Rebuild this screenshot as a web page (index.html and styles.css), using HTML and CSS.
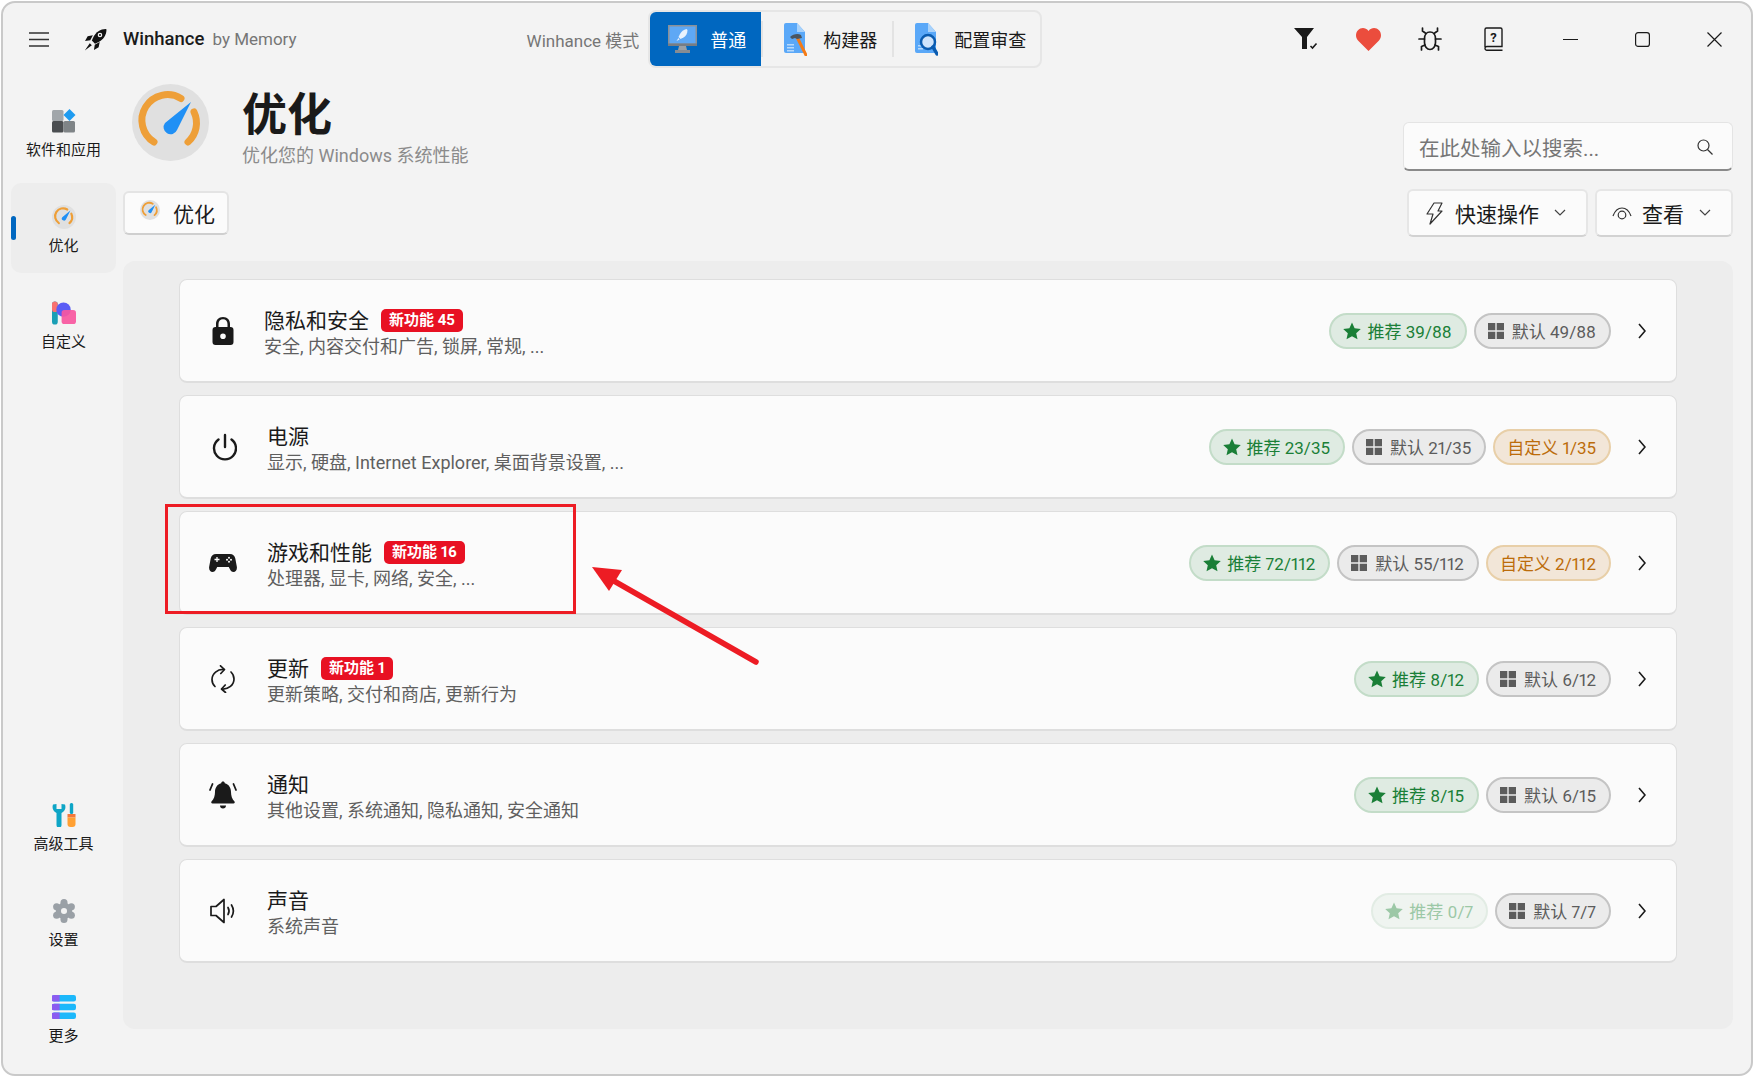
FILE: index.html
```html
<!DOCTYPE html>
<html lang="zh-CN">
<head>
    <meta charset="UTF-8">
    <title>Winhance</title>
    <link rel="stylesheet" href="styles.css">
</head>
<body>
    <svg class="sprite" xmlns="http://www.w3.org/2000/svg">
        <symbol id="gauge" viewBox="0 0 77 77">
            <circle cx="38.5" cy="38.5" r="38.5" fill="#e0e0e0"/>
            <path d="M22 58A25.5 25.5 0 0 1 49 14.500" fill="none" stroke="#ee9f38" stroke-width="7" stroke-linecap="round"/>
            <path d="M62 28A25.500 25.500 0 0 1 56 58" fill="none" stroke="#ee9f38" stroke-width="7" stroke-linecap="round"/>
            <path d="M59 18 45 46a7 7 0 1 1-12-7z" fill="#2090f5"/>
        </symbol>
        <symbol id="star" viewBox="0 0 18 18">
            <path d="M9 .6l2.600 5.700 6.200.7-4.600 4.200 1.300 6.100L9 14.200l-5.500 3.100 1.300-6.100L.2 7l6.200-.7z"/>
        </symbol>
        <symbol id="win" viewBox="0 0 16 16">
            <path d="M0 0h7.300v7.300H0zM8.700 0H16v7.300H8.700zM0 8.700h7.300V16H0zM8.700 8.700H16V16H8.700z"/>
        </symbol>
        <symbol id="chev" viewBox="0 0 8 16">
            <path d="M1 1l6 7-6 7" fill="none" stroke="#1a1a1a" stroke-width="1.600"/>
        </symbol>
        <symbol id="down" viewBox="0 0 12 8">
            <path d="M1 1l5 5 5-5" fill="none" stroke="#444" stroke-width="1.200"/>
        </symbol>
    </svg>

    <div class="window">
        <header class="titlebar">
            <svg class="menu-icon" viewBox="0 0 20 15"><path d="M0 1h20M0 7.500h20M0 14h20" stroke="#333" stroke-width="1.300"/></svg>
            <svg class="rocket" viewBox="0 0 22 22">
                <path d="M21 1c-5.500 0-9.500 3-12 7.500l-1.500 3.500 3 3 3.500-1.500C18.500 11 21.500 7 21.500 1.500z" fill="#111"/>
                <circle cx="15.300" cy="6.700" r="2.200" fill="#f3f3f3"/>
                <circle cx="15.300" cy="6.700" r="1" fill="#111"/>
                <path d="M8.500 7 3.500 8 1 12.500l5-.8zM15 13.500l-1 5-4.500 2.500.8-5zM5.500 14.500 .8 21.500l6.700-5z" fill="#111"/>
            </svg>
            <span class="app-name">Winhance</span>
            <span class="app-by">by Memory</span>
            <span class="mode-label">Winhance 模式</span>
            <div class="modes">
                <button class="mode mode-active">
                    <svg class="mode-monitor" viewBox="0 0 29 28">
                        <rect x="0" y="0" width="29" height="21" fill="#8b9198"/>
                        <rect x="1.500" y="1.500" width="26" height="17" fill="#5ea8f5"/>
                        <path d="M0 18.500h29V21H0z" fill="#777d84"/>
                        <path d="M11 21h7l1 4h-9z" fill="#9aa0a6"/>
                        <path d="M7 25h15v3H7z" fill="#868c93"/>
                        <path d="M18.500 4c-3 .5-5 2.500-6.500 5l-1.500 3 2 2 3-1.500c2.500-1.500 4-4 4-7.500z" fill="#eaf3fd"/>
                        <path d="M10.500 13 8.500 16l3-1.500z" fill="#eaf3fd"/>
                    </svg>
                    <span>普通</span>
                </button>
                <span class="mode-sep"></span>
                <button class="mode mode-build">
                    <svg class="mode-doc" viewBox="0 0 23 33">
                        <path d="M2 0h11l8 9v19a2 2 0 0 1-2 2H2a2 2 0 0 1-2-2V2a2 2 0 0 1 2-2z" fill="#5aa8f8"/>
                        <path d="M13 0l8 9h-8z" fill="#a8d2fb"/>
                        <path d="M3 21h7v1.500H3zM3 24h7v1.500H3zM3 27h7v1.500H3z" fill="#b7d9fb"/>
                        <path d="M13 14l9 18" stroke="#f47b16" stroke-width="3" stroke-linecap="round"/>
                        <path d="M6 14c3-3 8-4 11-2l1 3-5 1-2-1-3 1z" fill="#4a5560"/>
                    </svg>
                    <span>构建器</span>
                </button>
                <span class="mode-sep"></span>
                <button class="mode mode-audit">
                    <svg class="mode-doc" viewBox="0 0 23 33">
                        <path d="M2 0h11l8 9v19a2 2 0 0 1-2 2H2a2 2 0 0 1-2-2V2a2 2 0 0 1 2-2z" fill="#5aa8f8"/>
                        <path d="M13 0l8 9h-8z" fill="#a8d2fb"/>
                        <path d="M3 22h5v1.500H3zM3 25h5v1.500H3z" fill="#b7d9fb"/>
                        <circle cx="13" cy="19" r="7" fill="#cfe4fb" stroke="#0b5cb0" stroke-width="2.500"/>
                        <path d="M18 24l4 7" stroke="#0b5cb0" stroke-width="3.500" stroke-linecap="round"/>
                    </svg>
                    <span>配置审查</span>
                </button>
            </div>
            <div class="tools">
                <svg class="tool-filter" viewBox="0 0 25 22">
                    <path d="M0 0h20l-7 9v12H8V9z" fill="#1a1a1a"/>
                    <path d="M16.500 18l2 2 4-4.500" fill="none" stroke="#1a1a1a" stroke-width="1.600"/>
                </svg>
                <svg class="tool-heart" viewBox="0 0 25 23">
                    <path d="M12.500 23 2 12.500C-.7 9.500-.6 4.800 2 2.200 5-.7 9.500-.7 12.500 3c3-3.700 7.500-3.700 10.500-.8 2.600 2.600 2.700 7.300 0 10.300z" fill="#eb4d3d"/>
                </svg>
                <svg class="tool-bug" viewBox="0 0 24 24">
                    <g fill="none" stroke="#1a1a1a" stroke-width="1.700" stroke-linecap="round">
                        <path d="M12 5c-3.500 0-5.500 3-5.500 6.500v4C6.500 19.500 9 22.500 12 22.500s5.500-3 5.500-7v-4C17.500 8 15.500 5 12 5z"/>
                        <path d="M8 6.500 4.500 4V1M16 6.500 19.500 4V1M6.500 12H1M17.500 12H23M7 18l-3.500 1.500V23M17 18l3.500 1.500V23"/>
                    </g>
                </svg>
                <svg class="tool-book" viewBox="0 0 19 24">
                    <path d="M1 20V2.500A1.500 1.500 0 0 1 2.500 1h14A1.500 1.500 0 0 1 18 2.500V19.500H3a2 2 0 0 0-2 2 1.800 1.800 0 0 0 2 1.700h15.500" fill="none" stroke="#1a1a1a" stroke-width="1.400"/>
                    <text class="book-mark" x="9.500" y="14.500" text-anchor="middle">?</text>
                </svg>
                <div class="win-btns">
                    <svg viewBox="0 0 15 15"><path d="M0 7.500h15" stroke="#1a1a1a" stroke-width="1.200"/></svg>
                    <svg viewBox="0 0 15 15"><rect x=".6" y=".6" width="13.800" height="13.800" rx="2.500" fill="none" stroke="#1a1a1a" stroke-width="1.200"/></svg>
                    <svg viewBox="0 0 15 15"><path d="M.5.500l14 14M14.500.500l-14 14" stroke="#1a1a1a" stroke-width="1.200"/></svg>
                </div>
            </div>
        </header>

        <div class="app-body">
            <nav class="sidebar">
                <div class="nav-group">
                    <a class="nav-item">
                        <svg class="nav-icon" viewBox="0 0 24 24">
                            <rect x="0" y="1" width="11.500" height="11" rx="1.500" fill="#a1a6aa"/>
                            <rect x="0" y="12" width="11.500" height="11.500" rx="1.500" fill="#4b4e51"/>
                            <rect x="11.500" y="12" width="11.500" height="11.500" rx="1.500" fill="#7f8487"/>
                            <path d="M17.500 0l6 6-6 6-6-6z" fill="#1e9bf0"/>
                        </svg>
                        <span>软件和应用</span>
                    </a>
                    <a class="nav-item nav-active">
                        <svg class="nav-icon"><use href="#gauge"/></svg>
                        <span>优化</span>
                    </a>
                    <a class="nav-item">
                        <svg class="nav-icon" viewBox="0 0 25 24">
                            <rect x="0" y="0" width="6" height="24" rx="3" fill="#1a9fb5"/>
                            <rect x="0" y="0" width="6" height="11" rx="3" fill="#f87171"/>
                            <circle cx="12" cy="8.500" r="7.500" fill="#5a5cf5"/>
                            <rect x="10" y="9" width="15" height="14.500" rx="3" fill="#f957a0" opacity=".92"/>
                        </svg>
                        <span>自定义</span>
                    </a>
                </div>
                <div class="nav-group">
                    <a class="nav-item">
                        <svg class="nav-icon" viewBox="0 0 24 24">
                            <path d="M1 1.500c-1 3-.5 6.500 3.500 8.500v12a2.500 2.500 0 0 0 5 0V10c4-2 4.500-5.500 3.500-8.500L9.500 1v5h-5V1z" fill="#0ea5c6"/>
                            <rect x="17.800" y="0" width="3.400" height="11" rx="1.500" fill="#0ea5c6"/>
                            <path d="M15.500 11h8v3.500h-8z" fill="#f5793a"/>
                            <path d="M15.500 14.500h8V21a3 3 0 0 1-3 3h-2a3 3 0 0 1-3-3z" fill="#ffa033"/>
                        </svg>
                        <span>高级工具</span>
                    </a>
                    <a class="nav-item">
                        <svg class="nav-icon" viewBox="0 0 26 26">
                            <g fill="#9aa0a6">
                                <circle cx="13" cy="13" r="9"/>
                                <circle cx="13" cy="3.800" r="3.800"/>
                                <circle cx="13" cy="22.200" r="3.800"/>
                                <circle cx="5" cy="8.400" r="3.800"/>
                                <circle cx="21" cy="8.400" r="3.800"/>
                                <circle cx="5" cy="17.600" r="3.800"/>
                                <circle cx="21" cy="17.600" r="3.800"/>
                            </g>
                            <circle cx="13" cy="13" r="3.300" fill="#f3f3f3"/>
                        </svg>
                        <span>设置</span>
                    </a>
                    <a class="nav-item">
                        <svg class="nav-icon" viewBox="0 0 22 22">
                            <rect width="22" height="6" rx="2" fill="#1cb8fb"/>
                            <rect y="8" width="22" height="6" rx="2" fill="#1cb8fb"/>
                            <rect y="16" width="22" height="6" rx="2" fill="#1cb8fb"/>
                            <path d="M7 0H2a2 2 0 0 0 0 6h5zM7 8H2a2 2 0 0 0 0 6h5zM7 16H2a2 2 0 0 0 0 6h5z" fill="#8b5cf0"/>
                        </svg>
                        <span>更多</span>
                    </a>
                </div>
            </nav>

            <main class="main">
                <div class="page-head">
                    <svg class="page-icon"><use href="#gauge"/></svg>
                    <div class="page-titles">
                        <h1>优化</h1>
                        <p>优化您的 Windows 系统性能</p>
                    </div>
                    <div class="search">
                        <span>在此处输入以搜索...</span>
                        <svg viewBox="0 0 16 16"><circle cx="6.500" cy="6.500" r="5.500" fill="none" stroke="#333" stroke-width="1.200"/><path d="M10.500 10.500 15.500 15.500" stroke="#333" stroke-width="1.300"/></svg>
                    </div>
                </div>

                <div class="toolbar">
                    <div class="tab">
                        <svg class="tab-icon"><use href="#gauge"/></svg>
                        <span>优化</span>
                    </div>
                    <div class="actions">
                        <button class="action action-quick">
                            <svg class="action-bolt" viewBox="0 0 17 23"><path d="M8 1h8l-4 8h4L4 22l3-10H1z" fill="none" stroke="#333" stroke-width="1.200" stroke-linejoin="round"/></svg>
                            <span>快速操作</span>
                            <svg class="action-down"><use href="#down"/></svg>
                        </button>
                        <button class="action action-view">
                            <svg class="action-eye" viewBox="0 0 20 14"><path d="M1 10C3 4.500 6 2 10 2s7 2.500 9 8" fill="none" stroke="#333" stroke-width="1.200"/><circle cx="10" cy="9" r="3.800" fill="none" stroke="#333" stroke-width="1.200"/></svg>
                            <span>查看</span>
                            <svg class="action-down"><use href="#down"/></svg>
                        </button>
                    </div>
                </div>

                <section class="panel">
                    <div class="row row-lock">
                        <svg class="row-icon" viewBox="0 0 28 28"><path d="M14 0c-4.500 0-7 3-7 7v3H6.500C4.500 10 3.500 11 3.500 13v12c0 2 1 3 3 3h15c2 0 3-1 3-3V13c0-2-1-3-3-3H21V7c0-4-2.500-7-7-7zm-4.500 7c0-3 1.800-4.700 4.500-4.700s4.500 1.700 4.500 4.700v3h-9zM14 16.500a2.800 2.800 0 1 1 0 5.600 2.800 2.800 0 0 1 0-5.600z" fill="#1a1a1a"/></svg>
                        <div class="row-text">
                            <div class="row-title"><span>隐私和安全</span><span class="new-tag">新功能 45</span></div>
                            <div class="row-sub">安全, 内容交付和广告, 锁屏, 常规, ...</div>
                        </div>
                        <div class="pills">
                            <span class="pill pill-rec"><svg class="pill-star"><use href="#star"/></svg>推荐 39/88</span>
                            <span class="pill pill-def"><svg class="pill-win"><use href="#win"/></svg>默认 49/88</span>
                        </div>
                        <svg class="row-chev"><use href="#chev"/></svg>
                    </div>

                    <div class="row">
                        <svg class="row-icon" viewBox="0 0 28 28"><path d="M16 2v12" stroke="#1a1a1a" stroke-width="2.400" stroke-linecap="round"/><path d="M9.500 6.500a11 11 0 1 0 13 0" fill="none" stroke="#1a1a1a" stroke-width="2.400" stroke-linecap="round"/></svg>
                        <div class="row-text">
                            <div class="row-title"><span>电源</span></div>
                            <div class="row-sub">显示, 硬盘, Internet Explorer, 桌面背景设置, ...</div>
                        </div>
                        <div class="pills">
                            <span class="pill pill-rec"><svg class="pill-star"><use href="#star"/></svg>推荐 23/35</span>
                            <span class="pill pill-def"><svg class="pill-win"><use href="#win"/></svg>默认 21/35</span>
                            <span class="pill pill-custom">自定义 1/35</span>
                        </div>
                        <svg class="row-chev"><use href="#chev"/></svg>
                    </div>

                    <div class="row">
                        <svg class="row-icon" viewBox="0 0 28 28"><path d="M7 5h14c3 0 4.500 1.500 5.300 4.500l1.500 8c.6 3-1 5.500-3.300 5.500-1.800 0-2.800-1.200-3.700-3l-1-2H8.200l-1 2c-.9 1.800-1.900 3-3.700 3-2.300 0-3.900-2.500-3.300-5.500l1.500-8C2.500 6.500 4 5 7 5z" fill="#1a1a1a"/><path d="M8 8v5M5.500 10.500h5" stroke="#fbfbfb" stroke-width="1.300"/><circle cx="20" cy="8.800" r="1" fill="#fbfbfb"/><circle cx="20" cy="12.800" r="1" fill="#fbfbfb"/><circle cx="18" cy="10.800" r="1" fill="#fbfbfb"/><circle cx="22" cy="10.800" r="1" fill="#fbfbfb"/></svg>
                        <div class="row-text">
                            <div class="row-title"><span>游戏和性能</span><span class="new-tag">新功能 16</span></div>
                            <div class="row-sub">处理器, 显卡, 网络, 安全, ...</div>
                        </div>
                        <div class="pills">
                            <span class="pill pill-rec"><svg class="pill-star"><use href="#star"/></svg>推荐 72/112</span>
                            <span class="pill pill-def"><svg class="pill-win"><use href="#win"/></svg>默认 55/112</span>
                            <span class="pill pill-custom">自定义 2/112</span>
                        </div>
                        <svg class="row-chev"><use href="#chev"/></svg>
                    </div>

                    <div class="row">
                        <svg class="row-icon" viewBox="0 0 28 28"><g fill="none" stroke="#1a1a1a" stroke-width="1.700" stroke-linecap="round" stroke-linejoin="round"><path d="M15 4.500C8.500 4 3 8.500 3 14.500c0 3 1.200 5.300 3 7"/><path d="M11.500.8 15.500 4.500 11.800 8.500"/><path d="M13 24c6.500.5 12-4 12-10 0-3-1.200-5.300-3-7"/><path d="M16.500 27.500 12.500 24l3.700-4"/></g></svg>
                        <div class="row-text">
                            <div class="row-title"><span>更新</span><span class="new-tag">新功能 1</span></div>
                            <div class="row-sub">更新策略, 交付和商店, 更新行为</div>
                        </div>
                        <div class="pills">
                            <span class="pill pill-rec"><svg class="pill-star"><use href="#star"/></svg>推荐 8/12</span>
                            <span class="pill pill-def"><svg class="pill-win"><use href="#win"/></svg>默认 6/12</span>
                        </div>
                        <svg class="row-chev"><use href="#chev"/></svg>
                    </div>

                    <div class="row">
                        <svg class="row-icon" viewBox="0 0 28 28"><path d="M14 .5c1 0 1.700.7 1.800 1.700 4 1 6.200 4.500 6.200 8.800 0 3.500 1 7 3.500 9.500.6.700.2 2-1 2H3.500c-1.200 0-1.600-1.300-1-2C5 18 6 14.500 6 11c0-4.300 2.200-7.800 6.200-8.800C12.300 1.200 13 .5 14 .5zM11 24.500h6c0 2-1.200 3-3 3s-3-1-3-3z" fill="#1a1a1a"/><path d="M3.500 3 1 9M24.500 3 27 9" stroke="#1a1a1a" stroke-width="1.800" stroke-linecap="round"/></svg>
                        <div class="row-text">
                            <div class="row-title"><span>通知</span></div>
                            <div class="row-sub">其他设置, 系统通知, 隐私通知, 安全通知</div>
                        </div>
                        <div class="pills">
                            <span class="pill pill-rec"><svg class="pill-star"><use href="#star"/></svg>推荐 8/15</span>
                            <span class="pill pill-def"><svg class="pill-win"><use href="#win"/></svg>默认 6/15</span>
                        </div>
                        <svg class="row-chev"><use href="#chev"/></svg>
                    </div>

                    <div class="row">
                        <svg class="row-icon" viewBox="0 0 28 28"><g fill="none" stroke="#1a1a1a" stroke-width="1.700" stroke-linejoin="round" stroke-linecap="round"><path d="M2 9.500h5L15 2.500v23l-8-7H2z"/><path d="M19 10.500c1.200 2 1.200 5 0 7M22.500 8c2.200 3.500 2.200 8.500 0 12"/></g></svg>
                        <div class="row-text">
                            <div class="row-title"><span>声音</span></div>
                            <div class="row-sub">系统声音</div>
                        </div>
                        <div class="pills">
                            <span class="pill pill-rec pill-off"><svg class="pill-star"><use href="#star"/></svg>推荐 0/7</span>
                            <span class="pill pill-def"><svg class="pill-win"><use href="#win"/></svg>默认 7/7</span>
                        </div>
                        <svg class="row-chev"><use href="#chev"/></svg>
                    </div>
                </section>
            </main>
        </div>

        <div class="mark-box"></div>
        <svg class="mark-arrow" viewBox="0 0 180 110">
            <path d="M22 17 171 102" stroke="#ed1c24" stroke-width="5.500" stroke-linecap="round"/>
            <path d="M7 7 37 10 24 31z" fill="#ed1c24"/>
        </svg>
    </div>
</body>
</html>
```

FILE: styles.css
```css
* {
    box-sizing: border-box;
}
body {
    margin: 0;
    background: #fff;
    color: #1a1a1a;
    font-family: Roboto, "Noto Sans CJK SC", sans-serif;
    font-variant-numeric: proportional-nums;
}
button {
    font: inherit;
    color: inherit;
    background: none;
    border: 0;
    padding: 0;
}
h1, p {
    margin: 0;
}
.sprite {
    position: absolute;
    width: 0;
    height: 0;
}
.window {
    position: relative;
    display: flex;
    flex-direction: column;
    height: 1075px;
    margin: 1px;
    background: #f3f3f3;
    border: 2px solid #c9c9c9;
    border-radius: 14px;
    overflow: hidden;
}

/* title bar */
.titlebar {
    display: flex;
    align-items: center;
    flex: none;
    height: 72px;
    padding: 0 29px 0 26px;
}
.menu-icon {
    width: 20px;
    height: 15px;
}
.rocket {
    width: 23px;
    height: 23px;
    margin-left: 35px;
}
.app-name {
    margin-left: 16px;
    font-size: 18.500px;
    font-weight: 500;
}
.app-by {
    margin-left: 8px;
    font-size: 17px;
    color: #767676;
}
.mode-label {
    margin-left: 230px;
    font-size: 17px;
    color: #767676;
}
.modes {
    display: flex;
    align-items: center;
    height: 58px;
    margin-left: 9px;
    border: 2px solid #e6e6e6;
    border-radius: 8px;
    font-size: 18px;
}
.mode {
    display: flex;
    align-items: center;
    height: 54px;
}
.mode-active {
    width: 111px;
    padding-left: 18px;
    gap: 13px;
    background: #0067c0;
    border-radius: 6px 0 0 6px;
    color: #fff;
}
.mode-build {
    width: 129px;
    padding-left: 21px;
    gap: 16px;
}
.mode-audit {
    width: 146px;
    padding-left: 21px;
    gap: 16px;
}
.mode-sep {
    width: 2px;
    height: 36px;
    background: #e3e3e3;
}
.mode-monitor {
    width: 29px;
    height: 28px;
}
.mode-doc {
    width: 23px;
    height: 33px;
}
.tools {
    display: flex;
    align-items: center;
    gap: 37px;
    margin-left: auto;
}
.tool-filter {
    width: 25px;
    height: 22px;
}
.tool-heart {
    width: 25px;
    height: 23px;
}
.tool-bug {
    width: 24px;
    height: 24px;
}
.tool-book {
    width: 19px;
    height: 24px;
    margin-left: 5px;
}
.book-mark {
    font-size: 13px;
    font-weight: 700;
    fill: #1a1a1a;
}
.win-btns {
    display: flex;
    gap: 57px;
    margin-left: 23px;
}
.win-btns svg {
    width: 15px;
    height: 15px;
}

/* layout under the title bar */
.app-body {
    display: flex;
    flex: 1;
    min-height: 0;
}
.sidebar {
    display: flex;
    flex-direction: column;
    justify-content: space-between;
    flex: none;
    width: 120px;
    padding: 12px 0 11px 8px;
}
.nav-group {
    display: flex;
    flex-direction: column;
    gap: 6px;
}
.nav-item {
    position: relative;
    display: flex;
    flex-direction: column;
    align-items: center;
    width: 105px;
    height: 90px;
    padding-top: 22px;
    border-radius: 10px;
    font-size: 15px;
}
.nav-item span {
    margin-top: 7px;
    line-height: 21px;
}
.nav-icon {
    width: 24px;
    height: 24px;
}
.nav-active {
    background: #ededed;
}
.nav-active::before {
    content: "";
    position: absolute;
    left: 0;
    top: 33px;
    width: 5px;
    height: 24px;
    border-radius: 3px;
    background: #0067c0;
}

.main {
    display: flex;
    flex-direction: column;
    flex: none;
    width: 1610px;
}
.page-head {
    display: flex;
    flex: none;
    height: 105px;
    padding: 9px 0 9px 9px;
}
.page-icon {
    width: 77px;
    height: 77px;
}
.page-titles {
    margin-left: 33px;
    padding-top: 5px;
}
.page-titles h1 {
    font-size: 45px;
    font-weight: 700;
    line-height: 54px;
}
.page-titles p {
    font-size: 18px;
    line-height: 26px;
    color: #8b8b8b;
}
.search {
    display: flex;
    align-items: center;
    justify-content: space-between;
    align-self: flex-end;
    width: 330px;
    height: 49px;
    margin-left: auto;
    padding: 1px 19px 0 15px;
    background: #fbfbfb;
    border: 1px solid #e4e4e4;
    border-bottom: 2px solid #8a8a8a;
    border-radius: 6px;
    font-size: 20.500px;
    color: #767676;
}
.search svg {
    width: 16px;
    height: 16px;
}
.toolbar {
    display: flex;
    align-items: center;
    justify-content: space-between;
    flex: none;
    height: 48px;
    margin-top: 9px;
}
.tab {
    display: flex;
    align-items: center;
    width: 106px;
    height: 44px;
    padding-left: 15px;
    gap: 13px;
    background: #fbfbfb;
    border: 2px solid #e4e4e4;
    border-bottom-color: #cfcfcf;
    border-radius: 6px;
    font-size: 21px;
}
.tab-icon {
    width: 20px;
    height: 20px;
    margin-top: -6px;
}
.actions {
    display: flex;
    gap: 7px;
}
.action {
    display: flex;
    align-items: center;
    height: 48px;
    background: #fbfbfb;
    border: 2px solid #e6e6e6;
    border-bottom-color: #d2d2d2;
    border-radius: 6px;
    font-size: 21px;
}
.action-quick {
    width: 181px;
    padding-left: 17px;
}
.action-view {
    width: 138px;
    padding-left: 15px;
}
.action-bolt {
    width: 17px;
    height: 23px;
    margin-right: 12px;
}
.action-eye {
    width: 20px;
    height: 14px;
    margin-right: 10px;
}
.action-down {
    width: 12px;
    height: 8px;
    margin-left: 15px;
}

/* rows */
.panel {
    display: flex;
    flex-direction: column;
    gap: 12px;
    flex: none;
    height: 768px;
    margin-top: 24px;
    padding: 18px 56px;
    background: #ededed;
    border-radius: 12px;
}
.row {
    display: flex;
    align-items: center;
    flex: none;
    height: 104px;
    padding: 0 30px 0 29px;
    background: #fbfbfb;
    border: 1px solid #dedede;
    border-bottom-width: 2px;
    border-radius: 8px;
}
.row-icon {
    flex: none;
    width: 28px;
    height: 28px;
}
.row-text {
    margin-left: 30px;
    padding-top: 5px;
}
.row-lock .row-text {
    margin-left: 27px;
}
.row-title {
    display: flex;
    align-items: center;
    font-size: 21px;
    line-height: 26px;
}
.row-sub {
    font-size: 18px;
    line-height: 25px;
    color: #5f5f5f;
}
.new-tag {
    margin-left: 12px;
    padding: 0 8px;
    background: #e81123;
    border-radius: 5px;
    color: #fff;
    font-size: 15px;
    font-weight: 700;
    line-height: 23px;
}
.pills {
    display: flex;
    gap: 7px;
    margin-left: auto;
}
.pill {
    display: flex;
    align-items: center;
    height: 36px;
    padding: 0 13px 0 12px;
    border: 2px solid;
    border-radius: 18px;
    font-size: 17px;
    white-space: nowrap;
}
.pill-star {
    width: 18px;
    height: 18px;
    margin-right: 6px;
    fill: currentColor;
}
.pill-win {
    width: 16px;
    height: 16px;
    margin-right: 8px;
    fill: currentColor;
}
.pill-rec {
    background: #dfebe2;
    border-color: #c3dcc8;
    color: #1a7f37;
}
.pill-def {
    background: #ebebeb;
    border-color: #c4c4c4;
    color: #5c5c5c;
}
.pill-custom {
    background: #f2e6d8;
    border-color: #e8cfa8;
    color: #bc6c0a;
}
.pill-off {
    background: #eff4f0;
    border-color: #e2ece4;
    color: #9cc8a6;
}
.row-chev {
    flex: none;
    width: 8px;
    height: 16px;
    margin-left: 27px;
}

/* red annotation drawn over the window */
.mark-box {
    position: absolute;
    left: 162px;
    top: 501px;
    width: 411px;
    height: 110px;
    border: 3px solid #ed1c24;
}
.mark-arrow {
    position: absolute;
    left: 582px;
    top: 557px;
    width: 180px;
    height: 110px;
}
```
